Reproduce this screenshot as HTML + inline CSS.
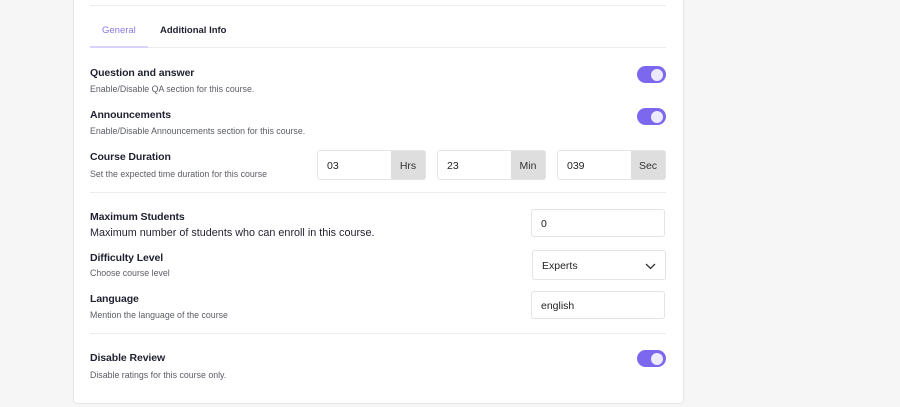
<!DOCTYPE html><html><head><style>
body{margin:0;width:900px;height:407px;background:#f6f6f7;font-family:"Liberation Sans",sans-serif;position:relative;overflow:hidden}
.card{position:absolute;left:73px;top:-10px;width:609px;height:412px;background:#fff;border:1px solid #e6e6e8;border-radius:4px}
.a{position:absolute}
.t{font-size:10.5px;color:#1f2130;font-weight:bold;letter-spacing:-0.1px}
.d{font-size:8.8px;color:#5a5d66}
.line{position:absolute;left:90px;width:576px;height:1px;background:#ececee}
.tog{position:absolute;left:637px;width:29px;height:17px;border-radius:9px;background:#7b68ee}
.tog:after{content:"";position:absolute;right:3px;top:2.5px;width:12px;height:12px;border-radius:50%;background:#eeeafd}
.in{position:absolute;height:28px;border:1px solid #e4e4e7;border-radius:3px;background:#fff;font-size:10.5px;color:#222;box-sizing:border-box;padding-left:9px;line-height:28px}
.suf{position:absolute;right:0;top:0;bottom:0;width:34px;background:#dededf;text-align:center;font-size:10.5px;color:#333}
</style></head><body>
<div class="card"></div>
<div class="line" style="top:5px"></div>
<div class="a" style="left:102px;top:25px;font-size:9.5px;color:#8a79e6">General</div>
<div class="a" style="left:160px;top:25px;font-size:9.5px;color:#1f2130;font-weight:bold">Additional Info</div>
<div class="line" style="top:47px"></div>
<div class="a" style="left:90px;top:46px;width:58px;height:2px;background:#d9d3fb"></div>

<div class="a t" style="left:90px;top:67px">Question and answer</div>
<div class="a d" style="left:90px;top:84px">Enable/Disable QA section for this course.</div>
<div class="tog" style="top:66px"></div>
<div class="a t" style="left:90px;top:109px">Announcements</div>
<div class="a d" style="left:90px;top:126px">Enable/Disable Announcements section for this course.</div>
<div class="tog" style="top:108px"></div>
<div class="a t" style="left:90px;top:151px">Course Duration</div>
<div class="a d" style="left:90px;top:169px">Set the expected time duration for this course</div>
<div class="in" style="left:317px;top:150px;width:109px;height:30px;line-height:30px">03<div class="suf">Hrs</div></div>
<div class="in" style="left:437px;top:150px;width:109px;height:30px;line-height:30px">23<div class="suf">Min</div></div>
<div class="in" style="left:557px;top:150px;width:109px;height:30px;line-height:30px">039<div class="suf">Sec</div></div>
<div class="line" style="top:192px"></div>

<div class="a t" style="left:90px;top:211px">Maximum Students</div>
<div class="a" style="left:90px;top:227px;font-size:10.8px;color:#1f2130">Maximum number of students who can enroll in this course.</div>
<div class="in" style="left:531px;top:209px;width:134px">0</div>
<div class="a t" style="left:90px;top:252px">Difficulty Level</div>
<div class="a d" style="left:90px;top:268px">Choose course level</div>
<div class="in" style="left:532px;top:250px;width:134px;height:30px;line-height:30px">Experts
<svg class="a" style="right:9px;top:12px" width="11" height="7" viewBox="0 0 11 7"><path d="M1 1l4.5 4.5L10 1" fill="none" stroke="#333" stroke-width="1.3"/></svg></div>
<div class="a t" style="left:90px;top:293px">Language</div>
<div class="a d" style="left:90px;top:310px">Mention the language of the course</div>
<div class="in" style="left:531px;top:291px;width:134px">english</div>
<div class="line" style="top:333px"></div>

<div class="a t" style="left:90px;top:352px">Disable Review</div>
<div class="a d" style="left:90px;top:370px">Disable ratings for this course only.</div>
<div class="tog" style="top:350px"></div>
</body></html>
